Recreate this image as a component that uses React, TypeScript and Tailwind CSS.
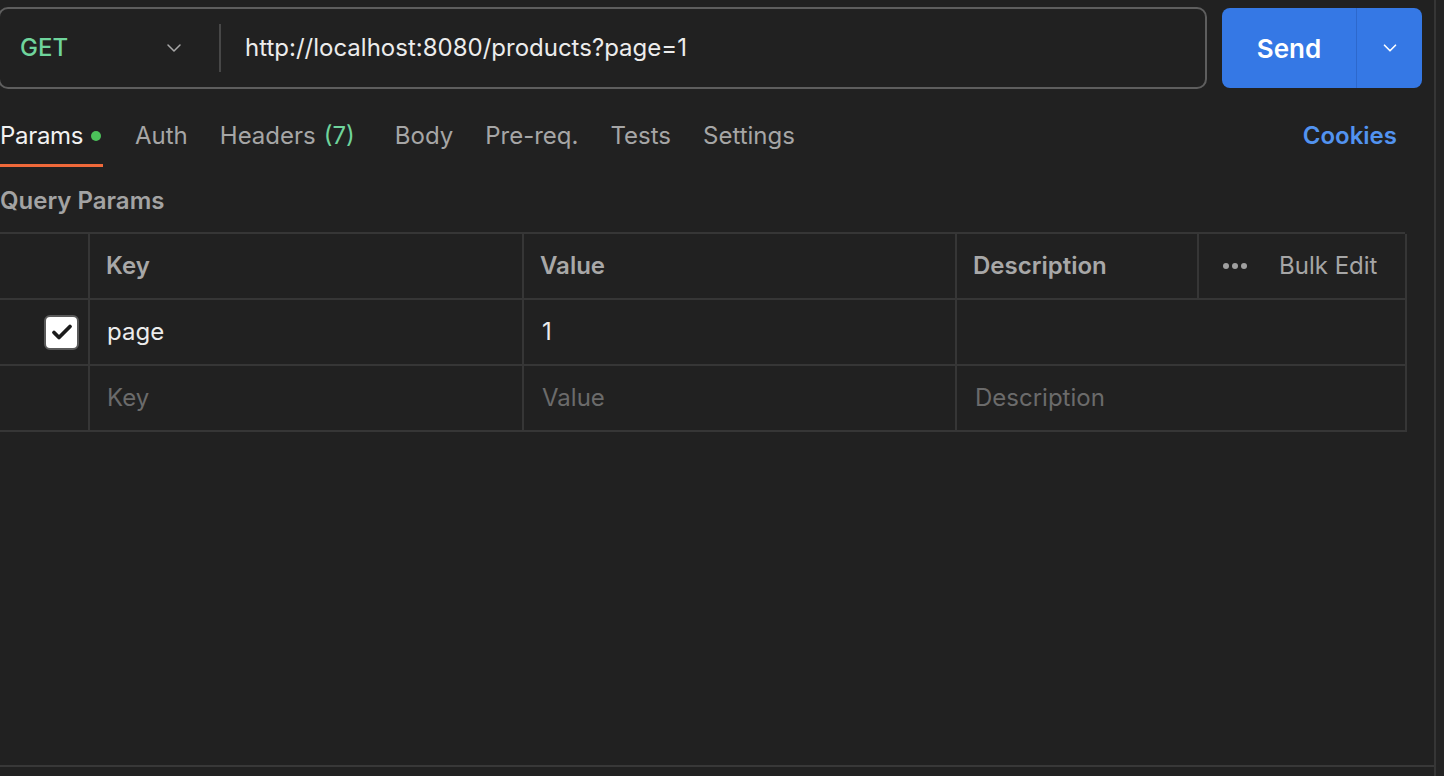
import { ChevronDown } from 'lucide-react'

const tabs = [
  { label: 'Auth' },
  { label: 'Headers', count: '(7)' },
  { label: 'Body' },
  { label: 'Pre-req.' },
  { label: 'Tests' },
  { label: 'Settings' },
]

function Checkbox() {
  return (
    <div className="w-[35px] h-[35px] rounded-[6px] bg-white border-2 border-[#5a5a5a] flex items-center justify-center">
      <svg width="24" height="24" viewBox="0 0 24 24" fill="none">
        <path d="M4 12.5l5 5L20 6.5" stroke="#1c1c1c" strokeWidth="3.8" strokeLinecap="round" strokeLinejoin="round" />
      </svg>
    </div>
  )
}

export default function App() {
  return (
    <div className="w-[1444px] h-[776px] bg-[#212121] overflow-hidden flex font-[Inter,sans-serif] text-[24px]">
      <div className="w-[1436px] h-full flex flex-col border-r-2 border-[#363636]">
        {/* Request bar */}
        <div className="flex items-center pt-[7px] gap-[15px]">
          <div className="ml-[-2px] w-[1209px] h-[82px] border-2 border-[#5e5e5e] rounded-[10px] flex items-center">
            <div className="w-[219px] flex items-center pl-[20px] pr-[33px] justify-between">
              <span className="text-[#6fd49c] font-medium">GET</span>
              <ChevronDown size={24} strokeWidth={1.5} className="text-[#a8a8a8]" />
            </div>
            <div className="w-[2px] h-[48px] bg-[#474747]" />
            <div className="pl-[24px] text-[#ececec]">http://localhost:8080/products?page=1</div>
          </div>
          <div className="w-[200px] h-[80px] rounded-[8px] bg-[#3578e5] flex">
            <div className="w-[134px] flex items-center justify-center text-white font-semibold text-[26px]">Send</div>
            <div className="w-[1px] bg-[#2d68cc]" />
            <div className="flex-1 flex items-center justify-center text-white">
              <ChevronDown size={22} strokeWidth={1.8} />
            </div>
          </div>
        </div>

        {/* Tabs */}
        <div className="flex items-start pr-[37px]">
          <div className="flex flex-col pt-[33px]">
            <div className="flex items-center leading-[28px] text-[#f2f2f2]">
              <span className="tracking-[-0.3px]">Params</span>
              <span className="ml-[8px] w-[10px] h-[10px] rounded-full bg-[#4cc35a]" />
            </div>
            <div className="mt-[14px] h-[3px] w-[103px] bg-[#f0693a]" />
          </div>
          <div className="flex gap-[32px] ml-[32px] pt-[33px] leading-[28px] text-[#a6a6a6]">
            {tabs.map((t) => (
              <span key={t.label} className={t.count ? 'pr-[8px]' : ''}>
                {t.label}
                {t.count && <span className="ml-[8px] text-[#6fd49c]">{t.count}</span>}
              </span>
            ))}
          </div>
          <div className="ml-auto pt-[33px] leading-[28px] text-[#5293f0] font-semibold">Cookies</div>
        </div>

        {/* Query params */}
        <div className="h-[66px] pt-[2px] flex items-center text-[#a3a3a3] font-semibold">Query Params</div>

        <div className="ml-[-6px] mt-[-1px] w-[1411px] grid grid-cols-[94px_434px_433px_242px_208px] border-t-2 border-l-2 border-[#363636]">
          {/* header */}
          <div className="h-[66px] border-r-2 border-b-2 border-[#363636]" />
          <div className="h-[66px] border-r-2 border-b-2 border-[#363636] flex items-center pl-[16px] font-semibold text-[#a8a8a8]">Key</div>
          <div className="h-[66px] border-r-2 border-b-2 border-[#363636] flex items-center pl-[16px] font-semibold text-[#a8a8a8]">Value</div>
          <div className="h-[66px] border-r-2 border-b-2 border-[#363636] flex items-center pl-[16px] font-semibold text-[#a8a8a8]">Description</div>
          <div className="h-[66px] border-r-2 border-b-2 border-[#363636] flex items-center pl-[23px] text-[#a6a6a6]">
            <svg width="26" height="8" viewBox="0 0 26 8" className="mr-[31px]">
              <circle cx="4" cy="4" r="3" fill="#a0a0a0" />
              <circle cx="13" cy="4" r="3" fill="#a0a0a0" />
              <circle cx="22" cy="4" r="3" fill="#a0a0a0" />
            </svg>
            Bulk Edit
          </div>

          {/* row 1 */}
          <div className="h-[66px] border-r-2 border-b-2 border-[#363636] flex items-center justify-end pr-[9px]">
            <Checkbox />
          </div>
          <div className="h-[66px] border-r-2 border-b-2 border-[#363636] flex items-center pl-[17px] text-[#ececec]">page</div>
          <div className="h-[66px] border-r-2 border-b-2 border-[#363636] flex items-center pl-[18px] text-[#ececec]">1</div>
          <div className="col-span-2 h-[66px] border-r-2 border-b-2 border-[#363636]" />

          {/* row 2 */}
          <div className="h-[66px] border-r-2 border-b-2 border-[#363636]" />
          <div className="h-[66px] border-r-2 border-b-2 border-[#363636] flex items-center pl-[17px] text-[#6b6b6b]">Key</div>
          <div className="h-[66px] border-r-2 border-b-2 border-[#363636] flex items-center pl-[18px] text-[#6b6b6b]">Value</div>
          <div className="col-span-2 h-[66px] border-r-2 border-b-2 border-[#363636] flex items-center pl-[18px] text-[#6b6b6b]">Description</div>
        </div>

        <div className="flex-1" />
        <div className="h-[2px] bg-[#383838] mb-[9px]" />
      </div>
      <div className="flex-1 bg-[#232323]" />
    </div>
  )
}
